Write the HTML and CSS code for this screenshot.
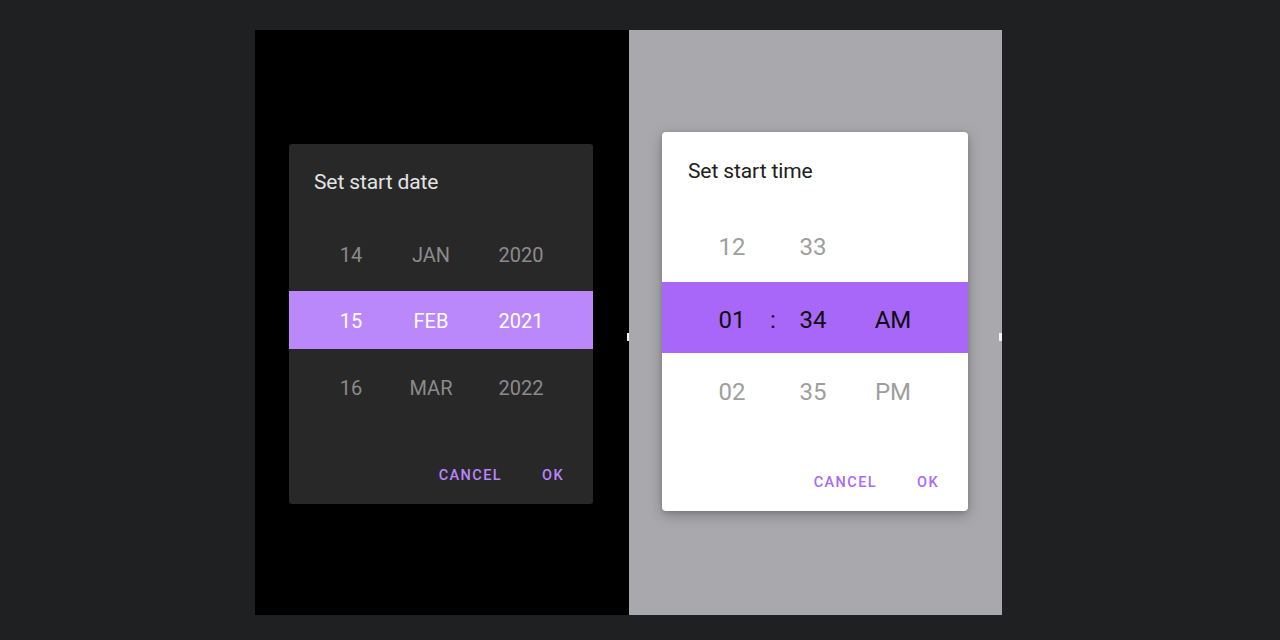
FILE: index.html
```html
<!DOCTYPE html>
<html>
<head>
<meta charset="utf-8">
<link rel="stylesheet" href="styles.css">
</head>
<body>
<div class="stage">
  <section class="panel panel-dark">
    <div class="dialog dialog-dark">
      <h2 class="title">Set start date</h2>
      <div class="picker">
        <div class="row row-top"><span>14</span><span>JAN</span><span>2020</span></div>
        <div class="row row-sel"><span>15</span><span>FEB</span><span>2021</span></div>
        <div class="row row-bot"><span>16</span><span>MAR</span><span>2022</span></div>
      </div>
      <div class="actions">
        <button class="btn">CANCEL</button>
        <button class="btn btn-ok">OK</button>
      </div>
    </div>
    <span class="handle"></span>
  </section>
  <section class="panel panel-light">
    <div class="dialog dialog-light">
      <h2 class="title">Set start time</h2>
      <div class="picker">
        <div class="row row-top"><span>12</span><span></span><span>33</span><span></span></div>
        <div class="row row-sel"><span>01</span><span>:</span><span>34</span><span>AM</span></div>
        <div class="row row-bot"><span>02</span><span></span><span>35</span><span>PM</span></div>
      </div>
      <div class="actions">
        <button class="btn">CANCEL</button>
        <button class="btn btn-ok">OK</button>
      </div>
    </div>
    <span class="handle"></span>
  </section>
</div>
</body>
</html>
```
FILE: styles.css
```css
* { box-sizing: border-box; }
html, body { margin: 0; padding: 0; }
body {
  background: #1f2022;
  width: 1280px;
  height: 640px;
  overflow: hidden;
  font-family: Roboto, "Liberation Sans", sans-serif;
}
.stage {
  display: flex;
  margin: 30px 0 0 255px;
  height: 585px;
}
.panel {
  position: relative;
  display: flex;
  flex-direction: column;
  height: 585px;
}
.panel-dark { width: 374px; background: #000; padding: 114px 0 0 34px; }
.panel-light { width: 373px; background: #a9a8ac; padding: 102px 0 0 33px; }
.handle {
  position: absolute;
  right: -1px;
  top: 303px;
  width: 3px;
  height: 8px;
  background: #f4f4f4;
}
.panel-light .handle { right: 0; }

.dialog {
  display: flex;
  flex-direction: column;
}
.dialog-dark {
  width: 304px;
  height: 360px;
  background: #282828;
  border-radius: 3px;
  padding-top: 24px;
}
.dialog-light {
  width: 306px;
  height: 379px;
  background: #fff;
  border-radius: 4px;
  padding-top: 25px;
  box-shadow: 0 4px 14px rgba(0,0,0,0.25), 0 1px 4px rgba(0,0,0,0.15);
}
.title {
  margin: 0;
  font-weight: 400;
  font-size: 21px;
  line-height: 28px;
  letter-spacing: -0.1px;
}
.dialog-dark .title { color: #e3e3e3; padding-left: 25px; }
.dialog-light .title { color: #202020; padding-left: 26px; }

.picker { display: flex; flex-direction: column; }
.row {
  display: grid;
  align-items: center;
  justify-items: center;
}
.dialog-dark .picker { margin-top: 21px; }
.dialog-dark .row {
  grid-template-columns: 80px 80px 100px;
  padding-left: 22px;
  font-size: 20px;
  color: #8b8b8b;
}
.dialog-dark .row-top { height: 74px; padding-top: 2px; }
.dialog-dark .row-sel { height: 58px; background: #bb88fb; color: #fff; padding-top: 2px; }
.dialog-dark .row-bot { height: 76px; padding-top: 2px; }

.dialog-light .picker { margin-top: 25px; }
.dialog-light .row {
  grid-template-columns: 60px 22px 58px 102px;
  padding-left: 40px;
  font-size: 24px;
  color: #9e9e9e;
}
.dialog-light .row-top { height: 72px; padding-top: 2px; }
.dialog-light .row-sel { height: 71px; background: #a867f9; color: #0d0d0d; padding-top: 4px; }
.dialog-light .row-bot { height: 76px; padding-top: 2px; }

.actions {
  display: flex;
  justify-content: flex-end;
  gap: 11px;
  padding-right: 8px;
  margin-top: auto;
  margin-bottom: 11px;
}
.btn {
  background: none;
  border: 0;
  height: 36px;
  min-width: 64px;
  padding: 0 8px;
  font-family: Roboto, "Liberation Sans", sans-serif;
  font-weight: 500;
  font-size: 14.5px;
  letter-spacing: 1.4px;
  cursor: pointer;
}
.dialog-dark .btn { color: #bb86fc; }
.dialog-light .btn { color: #a86af8; }
```
